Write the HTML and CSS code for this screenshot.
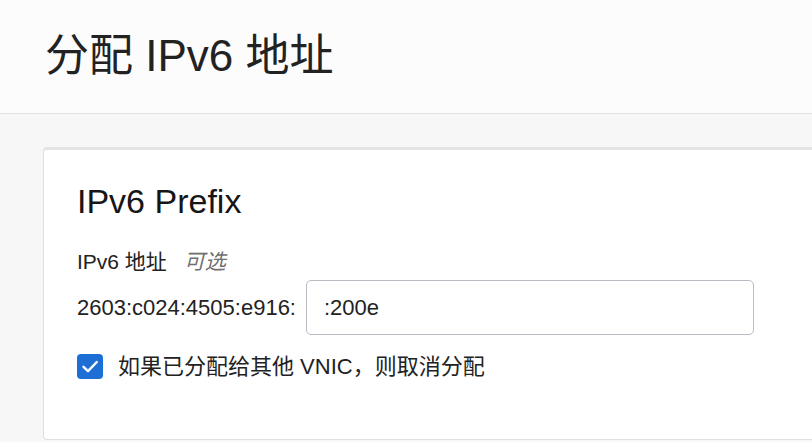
FILE: index.html
```html
<!DOCTYPE html>
<html lang="zh-CN">
<head>
<meta charset="utf-8">
<title>分配 IPv6 地址</title>
<link rel="stylesheet" href="styles.css">
</head>
<body>
<header class="page-header">
  <h1 class="page-title">分配 IPv6 地址</h1>
</header>
<main class="page-body">
  <section class="card">
    <h2 class="card-title">IPv6 Prefix</h2>
    <div class="field-label">IPv6 地址 <span class="optional">可选</span></div>
    <div class="address-row">
      <span class="prefix">2603:c024:4505:e916:</span>
      <input class="address-input" type="text" value=":200e">
    </div>
    <label class="check-row">
      <span class="checkbox">
        <svg viewBox="0 0 26 25" width="26" height="25"><path d="M6.5 12.8 L11 17.2 L19.8 8" fill="none" stroke="#fff" stroke-width="2.4" stroke-linecap="round" stroke-linejoin="round"/></svg>
      </span>
      <span class="check-text">如果已分配给其他 VNIC，则取消分配</span>
    </label>
  </section>
</main>
</body>
</html>
```

FILE: styles.css
```css
html, body {
  margin: 0;
  padding: 0;
  height: 100%;
}
body {
  background: #f7f7f7;
  font-family: "Liberation Sans", "Noto Sans CJK SC", sans-serif;
  color: #1f1f1f;
  overflow: hidden;
}
.page-header {
  box-sizing: border-box;
  background: #fcfcfc;
  border-bottom: 1px solid #e4e4e4;
  height: 114px;
  padding: 30px 0 0 45px;
}
.page-title {
  margin: 0;
  font-size: 44px;
  line-height: 52px;
  font-weight: normal;
  color: #222;
}
.page-body {
  padding: 33px 0 0 43px;
}
.card {
  background: #fff;
  border: 1px solid #e0e0e0;
  border-top: 3px solid #e3e3e6;
  border-right: none;
  border-radius: 4px 0 0 4px;
  padding: 31px 0 60px 33px;
  margin-right: -10px;
}
.card-title {
  margin: 0;
  font-size: 34px;
  line-height: 40px;
  font-weight: normal;
  color: #161616;
}
.field-label {
  margin-top: 28px;
  font-size: 21px;
  line-height: 26px;
  color: #222;
}
.optional {
  margin-left: 11px;
  font-style: italic;
  color: #6f6f6f;
}
.address-row {
  margin-top: 5px;
  display: flex;
  align-items: center;
  gap: 10px;
}
.prefix {
  font-size: 22px;
  color: #222;
}
.address-input {
  box-sizing: border-box;
  width: 448px;
  height: 55px;
  border: 1px solid #b8bbc1;
  border-radius: 5px;
  padding: 0 0 0 17px;
  font-family: "Liberation Sans", "Noto Sans CJK SC", sans-serif;
  font-size: 22px;
  color: #222;
  background: #fff;
  outline: none;
}
.check-row {
  margin-top: 19px;
  display: flex;
  align-items: center;
  gap: 15px;
}
.checkbox {
  width: 26px;
  height: 25px;
  border-radius: 4px;
  background: #1d6fd6;
  display: flex;
}
.check-text {
  font-size: 22px;
  line-height: 25px;
  color: #222;
}
```
